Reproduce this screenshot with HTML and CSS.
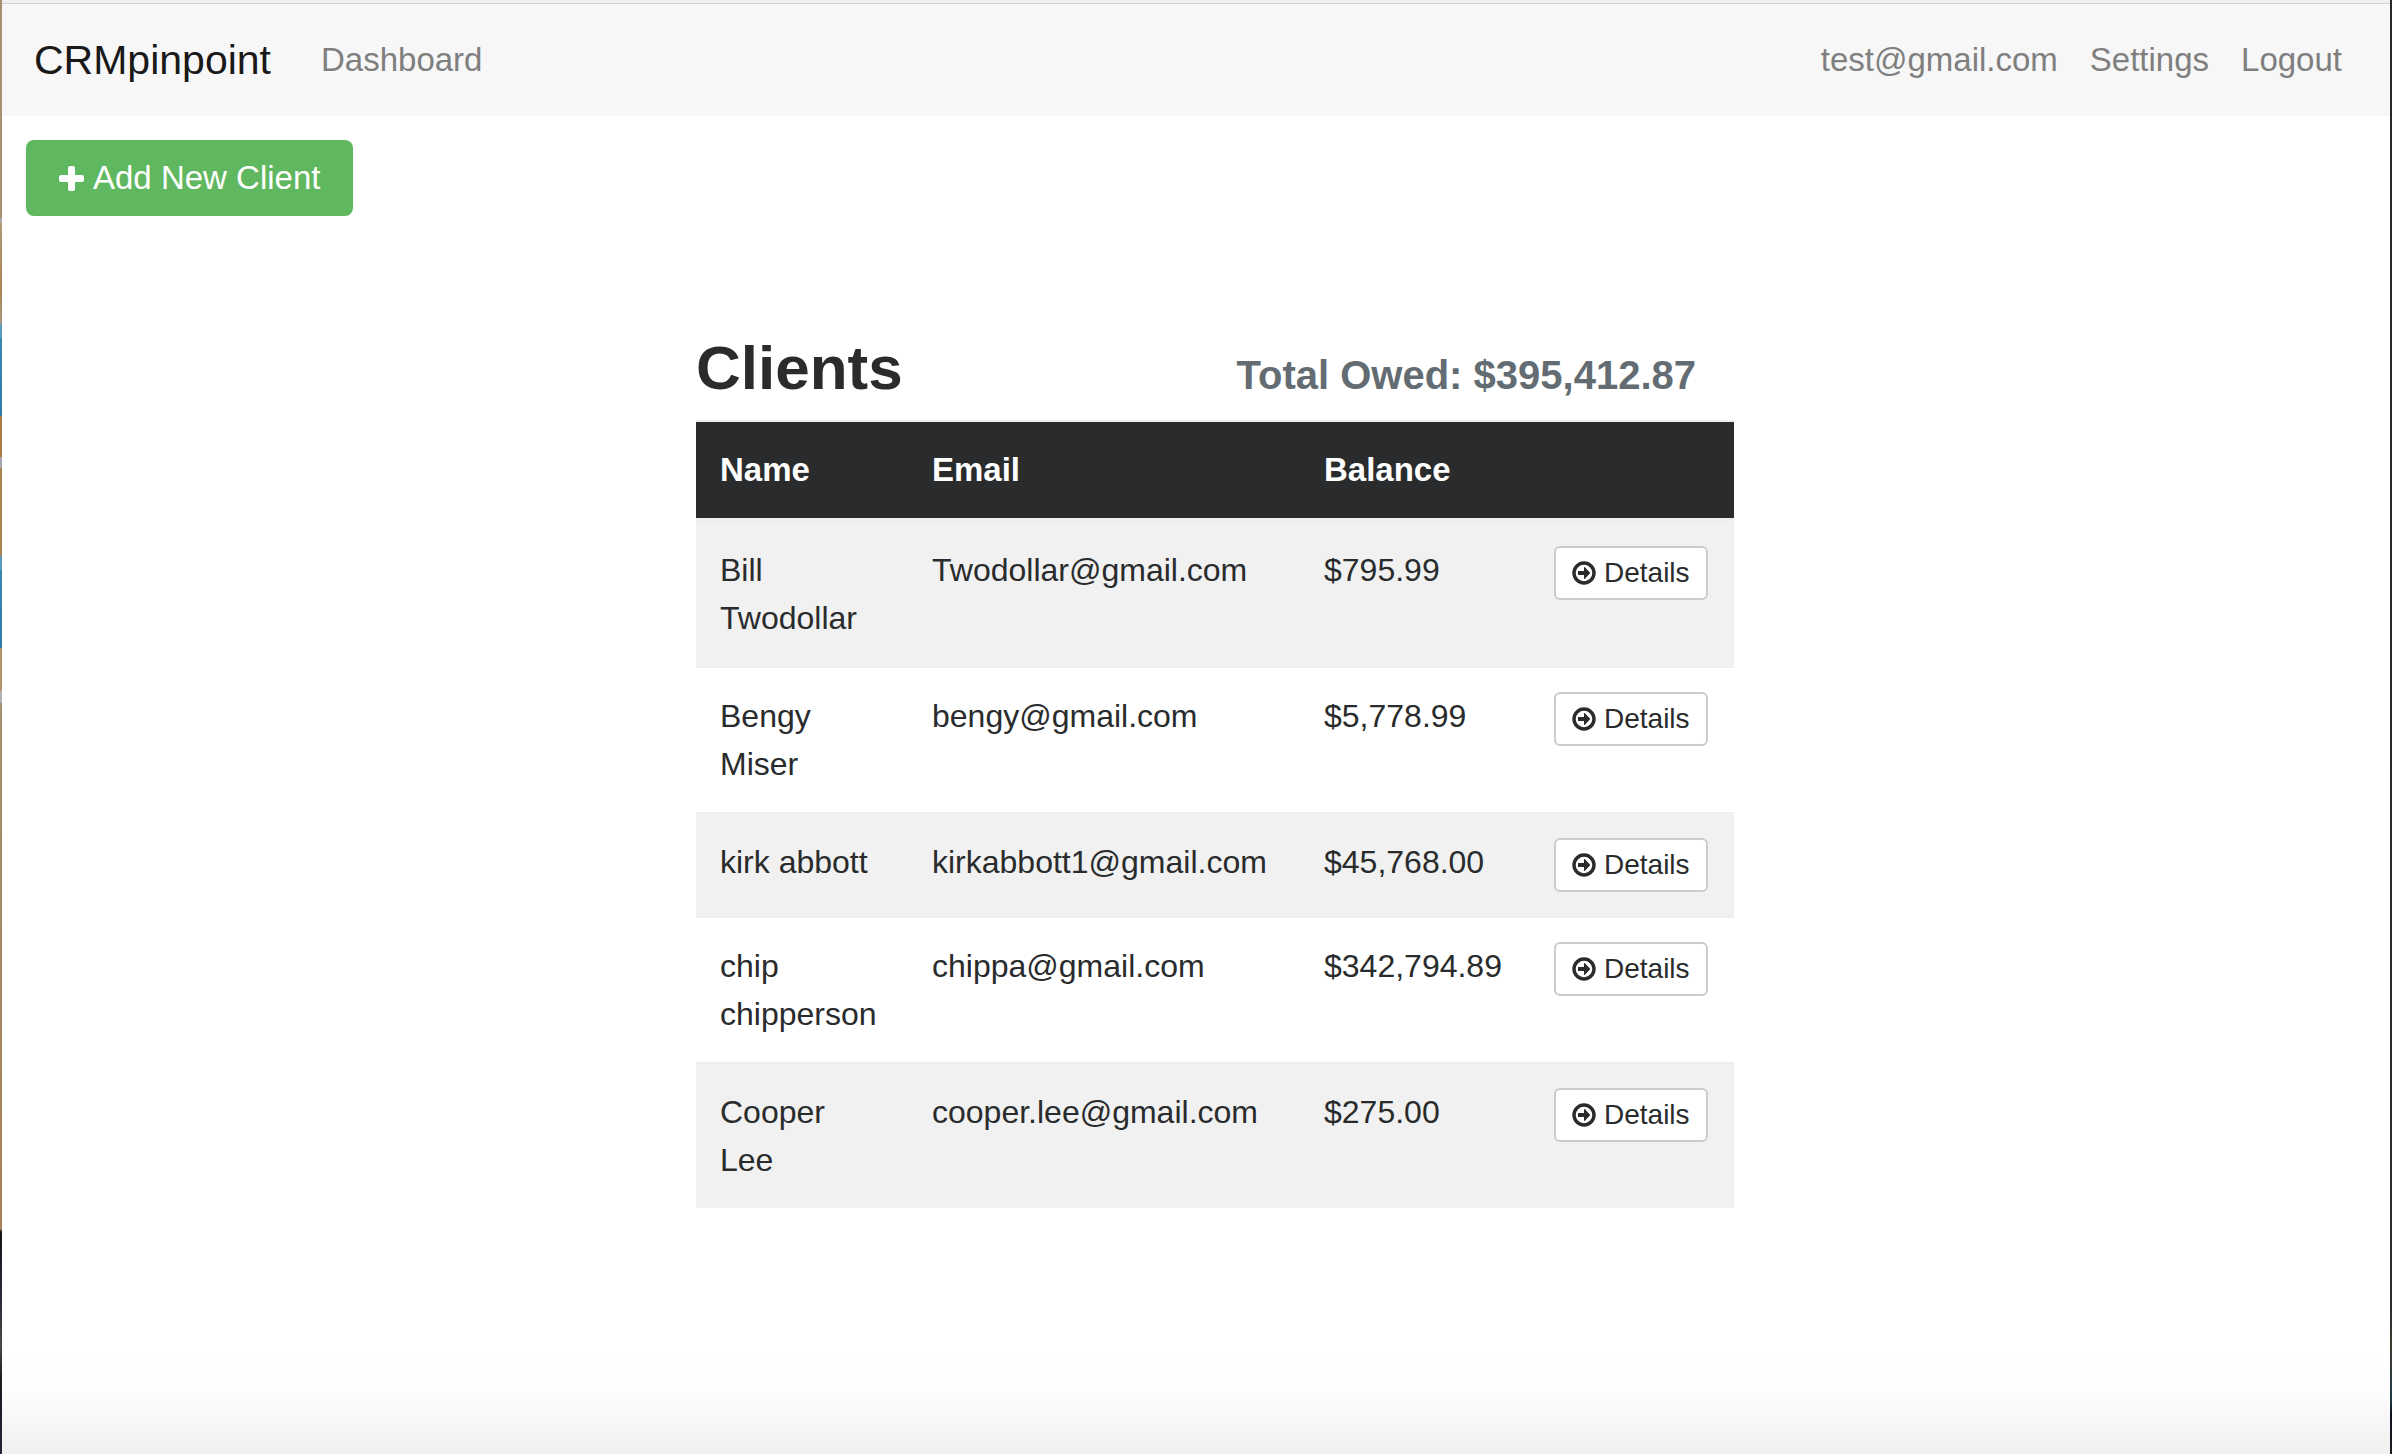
FILE: index.html
```html
<!DOCTYPE html>
<html lang="en">
<head>
<meta charset="utf-8">
<title>CRMpinpoint</title>
<link rel="stylesheet" href="styles.css">
</head>
<body>
<svg class="sprite" aria-hidden="true">
  <symbol id="arrow" viewBox="0 0 24 24">
    <circle cx="12" cy="12" r="10" fill="none" stroke="currentColor" stroke-width="3.4"/>
    <path fill="currentColor" d="M6 10h6V6.600c0-.5.5-.7.9-.4l5 5.200q.6.6 0 1.200l-5 5.200c-.4.3-.9.1-.9-.4V14H6z"/>
  </symbol>
</svg>
<div class="edge edge-left"></div>
<div class="page">
  <nav class="navbar">
    <a class="brand" href="#">CRMpinpoint</a>
    <a class="nav-link" href="#">Dashboard</a>
    <div class="nav-user">
      <a class="nav-link" href="#">test@gmail.com</a>
      <a class="nav-link" href="#">Settings</a>
      <a class="nav-link" href="#">Logout</a>
    </div>
  </nav>
  <main>
    <button class="btn-add" type="button"><svg class="icon-plus" viewBox="0 0 25 25" aria-hidden="true"><path fill="currentColor" d="M11 0h3q2 0 2 2v7h7q2 0 2 2v3q0 2-2 2h-7v7q0 2-2 2h-3q-2 0-2-2v-7H2q-2 0-2-2v-3q0-2 2-2h7V2q0-2 2-2z"/></svg>Add New Client</button>
    <div class="layout">
      <section class="clients">
        <header class="clients-head">
          <h2>Clients</h2>
          <h5>Total Owed: $395,412.87</h5>
        </header>
        <table>
          <colgroup><col class="c-name"><col class="c-email"><col class="c-balance"><col></colgroup>
          <thead>
            <tr><th>Name</th><th>Email</th><th>Balance</th><th></th></tr>
          </thead>
          <tbody>
            <tr><td>Bill Twodollar</td><td>Twodollar@gmail.com</td><td>$795.99</td><td><a class="btn" href="#"><svg class="icon" aria-hidden="true"><use href="#arrow"/></svg>Details</a></td></tr>
            <tr><td>Bengy Miser</td><td>bengy@gmail.com</td><td>$5,778.99</td><td><a class="btn" href="#"><svg class="icon" aria-hidden="true"><use href="#arrow"/></svg>Details</a></td></tr>
            <tr><td>kirk abbott</td><td>kirkabbott1@gmail.com</td><td>$45,768.00</td><td><a class="btn" href="#"><svg class="icon" aria-hidden="true"><use href="#arrow"/></svg>Details</a></td></tr>
            <tr><td>chip chipperson</td><td>chippa@gmail.com</td><td>$342,794.89</td><td><a class="btn" href="#"><svg class="icon" aria-hidden="true"><use href="#arrow"/></svg>Details</a></td></tr>
            <tr><td>Cooper Lee</td><td>cooper.lee@gmail.com</td><td>$275.00</td><td><a class="btn" href="#"><svg class="icon" aria-hidden="true"><use href="#arrow"/></svg>Details</a></td></tr>
          </tbody>
        </table>
      </section>
    </div>
  </main>
</div>
<div class="edge edge-right"></div>
</body>
</html>
```
FILE: styles.css
```css
* { box-sizing: border-box; }

body {
  margin: 0;
  min-height: 100vh;
  display: grid;
  grid-template-columns: 2px minmax(0, 1fr) 2px;
  font: 32px/48px "Liberation Sans", Arial, sans-serif;
  color: #292b2c;
}

a { color: inherit; text-decoration: none; }

.sprite { display: none; }

.edge-left {
  background: linear-gradient(#a8906e 0 218px, #a9a9ad 218px 223px, #b09a78 223px, #ad8352 290px, #a8987c 324px, #5b9abb 324px 338px, #3a88b0 338px, #2f7ba5 416px, #aa7b45 416px 457px, #a5a5aa 457px 468px, #aa8350 468px 556px, #5b9abb 556px 570px, #3a88b0 570px, #2f7ba5 648px, #b0936a 648px 691px, #b0b0b5 691px 703px, #a3906c 703px, #a98059 1229px, #15141a 1232px, #2b2b3a 1300px, #4a4848 1345px, #1c1a1e 1380px, #23253a);
}

.edge-right {
  background: linear-gradient(#29272a, #2b2b2a 1300px, #3d3c32 1350px, #203a48 1400px, #10131b 1414px, #1b1d24);
}

.page {
  border-top: 3px solid #f1f1f1;
  background: linear-gradient(to top, #f0f0f0, #fdfdfd 60px, #fff 100px);
}

.navbar {
  display: flex;
  align-items: center;
  gap: 50px;
  padding: 16px 48px 16px 32px;
  height: 113px;
  border-top: 1px solid #cfcfcf;
  background: #f7f7f7;
}

.brand { font-size: 41px; color: #191919; }

.nav-link { font-size: 33px; color: #7f7f7f; }

.nav-user { display: flex; gap: 32px; margin-left: auto; }

main { padding: 24px 0; }

.btn-add {
  display: flex;
  align-items: center;
  gap: 9px;
  height: 76px;
  margin-left: 24px;
  padding: 0 33px;
  border: 0;
  border-radius: 8px;
  background: #5fb760;
  color: #fff;
  font: inherit;
  font-size: 33px;
}

.icon-plus { width: 25px; height: 25px; }

.layout {
  display: grid;
  grid-template-columns: 694fr minmax(1038px, 1038fr) 656fr;
  padding-top: 112px;
}

.clients { grid-column: 2; }

.clients-head {
  display: flex;
  justify-content: space-between;
  align-items: baseline;
  height: 92px;
  padding-right: 38px;
}

h2, h5 { margin: 0; font-weight: bold; }
h2 { font-size: 62px; line-height: 80px; }
h5 { font-size: 40px; color: #636c72; }

table {
  width: 100%;
  table-layout: fixed;
  border-spacing: 0;
}

.c-name { width: 212px; }
.c-email { width: 392px; }
.c-balance { width: 230px; }

th, td {
  padding: 24px;
  text-align: left;
  vertical-align: top;
  border-top: 2px solid #eceeef;
}

td:last-child { padding-right: 0; }

th {
  border-bottom: 4px solid #eceeef;
  background: #292b2c;
  background-clip: padding-box;
  color: #fff;
  font-size: 33px;
}

tbody tr:first-child td { border-top: 0; }
tbody tr:nth-child(odd) { background: #f1f1f1; }

.btn {
  display: flex;
  align-items: center;
  gap: 8px;
  width: fit-content;
  height: 54px;
  padding: 0 16px;
  border: 2px solid #ccc;
  border-radius: 6px;
  background: #fff;
  font-size: 28px;
}

.icon { width: 24px; height: 24px; }
```
